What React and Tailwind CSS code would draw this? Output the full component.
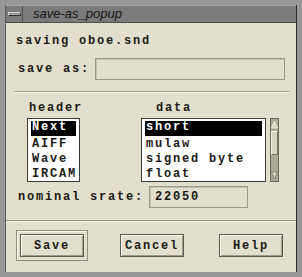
import React from "react";

const mono = "font-['Liberation_Mono',monospace] font-bold text-[12px] tracking-[1.8px] text-[#1a1a14]";

function ListBox({ items, selected, width }) {
    return (
        <div className={`h-[64px] ${width} bg-white border border-[#3a3a36] pt-[2px] px-[3px]`}>
            {items.map((item, i) => (
                <div
                    key={item}
                    className={`h-[15px] leading-[13px] pl-[1px] ${mono} ${i === selected ? "bg-black text-white h-[13px] mb-[2px]" : ""}`}
                >
                    {item}
                </div>
            ))}
        </div>
    );
}

function Button({ label, isDefault }) {
    const btn = (
        <div className="w-[64px] h-[23px] flex items-center justify-center bg-[#e2e0cc] border border-[#5c5b50] shadow-[inset_1px_1px_0_#fbfbf2,inset_-1px_-1px_0_#9c9a88]">
            <span className={mono}>{label}</span>
        </div>
    );
    if (!isDefault) return <div className="mt-[4px]">{btn}</div>;
    return (
        <div className="p-[3px] border border-[#8f8d7c] shadow-[inset_1px_1px_0_#fbfbf2]">
            {btn}
        </div>
    );
}

function ScrollBar() {
    return (
        <div className="w-[9px] h-[64px] bg-[#a9a796] border border-[#6a695c] flex flex-col items-center">
            <svg width="7" height="9" viewBox="0 0 7 9" className="mt-[1px]">
                <polygon points="3.5,1 6.5,8 0.5,8" fill="#d8d6c4" stroke="#f4f3e8" strokeWidth="0.8" />
            </svg>
            <div className="w-[7px] h-[24px] mt-[2px] bg-[#d6d4c2] border-t border-l border-[#f5f4ea] border-r border-b border-r-[#77766a] border-b-[#77766a]" />
            <div className="flex-1" />
            <svg width="7" height="9" viewBox="0 0 7 9" className="mb-[1px]">
                <polygon points="0.5,1 6.5,1 3.5,8" fill="#d8d6c4" stroke="#77766a" strokeWidth="0.8" />
            </svg>
        </div>
    );
}

export default function App() {
    return (
        <div className="w-[302px] h-[277px] bg-[#989898] p-[5px] pr-[5px] pb-[5px] overflow-hidden">
            <div className="w-[292px] h-[267px] flex flex-col border-r border-[#2a2a2a] border-l border-l-[#5a5a5a]">

                {/* TITLE BAR */}
                <div className="h-[18px] flex items-center bg-[#7b7b7b] border-t border-[#a8a8a8] border-b border-b-[#4d4d4d]">
                    <div className="w-[17px] h-full flex items-center justify-center border-r border-[#4d4d4d]">
                        <div className="w-[13px] h-[4px] bg-[#9d9d9d] border border-t-[#d0d0d0] border-l-[#d0d0d0] border-r-[#333] border-b-[#333]" />
                    </div>
                    <span className="ml-[10px] font-['Liberation_Sans',sans-serif] italic text-[13px] leading-[16px] text-[#141414]">
                        save-as_popup
                    </span>
                </div>

                {/* CONTENT */}
                <div className="flex-1 bg-[#e2e0cc] flex flex-col">

                    <div className={`mt-[11px] ml-[10px] leading-[14px] ${mono}`}>saving oboe.snd</div>

                    <div className="mt-[10px] ml-[12px] flex items-center">
                        <span className={`w-[77px] ${mono}`}>save as:</span>
                        <div className="w-[190px] h-[22px] border border-[#9b998a] shadow-[inset_1px_1px_0_#c4c2b0]" />
                    </div>

                    <div className="mt-[11px] ml-[8px] w-[275px] h-[2px] border-t border-[#9c9a89] border-b border-b-[#f6f5ec]" />

                    <div className="mt-[9px] flex">
                        <div className="ml-[21px] flex flex-col">
                            <span className={`ml-[2px] leading-[12px] ${mono}`}>header</span>
                            <div className="mt-[4px]">
                                <ListBox items={["Next", "AIFF", "Wave", "IRCAM"]} selected={0} width="w-[53px]" />
                            </div>
                        </div>
                        <div className="ml-[58px] flex flex-col">
                            <span className={`ml-[15px] leading-[12px] ${mono}`}>data</span>
                            <div className="mt-[4px] flex gap-[4px]">
                                <ListBox items={["short", "mulaw", "signed byte", "float"]} selected={0} width="w-[125px]" />
                                <ScrollBar />
                            </div>
                        </div>
                    </div>

                    <div className="mt-[4px] ml-[12px] flex items-center">
                        <span className={`w-[131px] ${mono}`}>nominal srate:</span>
                        <div className={`w-[99px] h-[22px] border border-[#9b998a] shadow-[inset_1px_1px_0_#c4c2b0] flex items-center pl-[5px] ${mono}`}>
                            22050
                        </div>
                    </div>

                    <div className="mt-[12px] w-full h-[2px] border-t border-[#8f8d7c] border-b border-b-[#f6f5ec]" />

                    <div className="mt-[8px] ml-[10px] flex items-start">
                        <Button label="Save" isDefault />
                        <div className="ml-[32px]"><Button label="Cancel" /></div>
                        <div className="ml-[35px]"><Button label="Help" /></div>
                    </div>

                </div>
            </div>
        </div>
    );
}
